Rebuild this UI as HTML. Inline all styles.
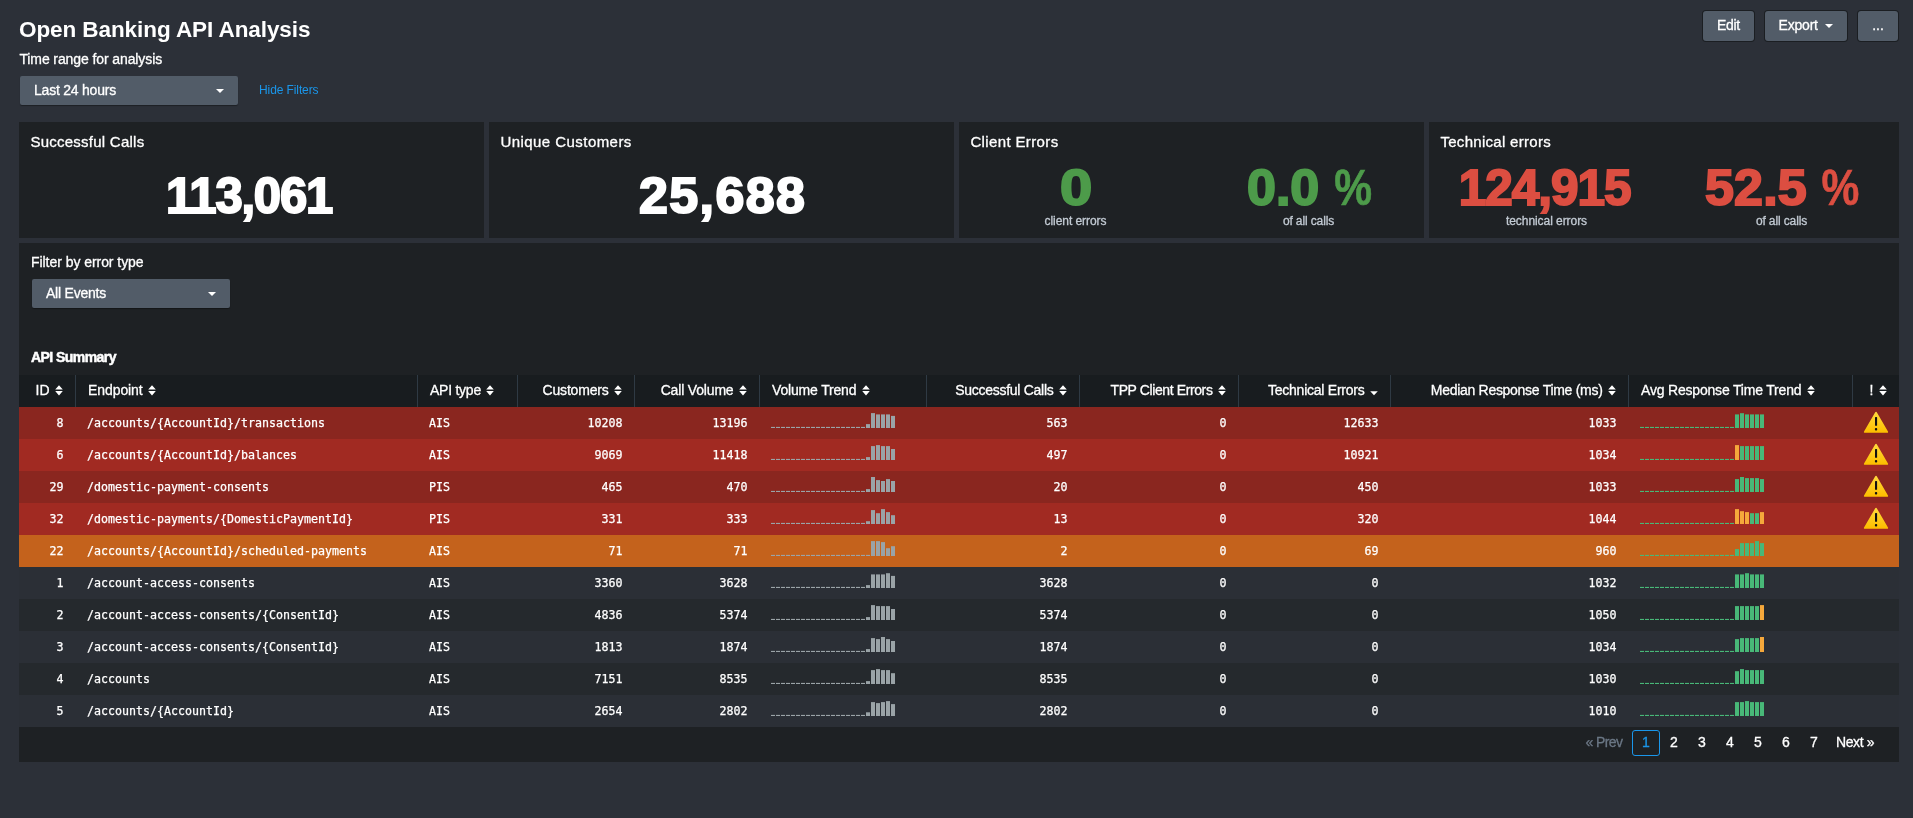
<!DOCTYPE html><html lang="en"><head><meta charset="utf-8"><title>Open Banking API Analysis</title><style>
*{box-sizing:border-box;margin:0;padding:0}
html,body{width:1913px;height:818px;overflow:hidden;background:#2c3038;}
body{position:relative;font-family:"Liberation Sans",sans-serif;color:#fff;font-size:14px;-webkit-font-smoothing:antialiased;will-change:transform}
th,.lbl,.pt,.btn,.dd,.pg,.sub{-webkit-text-stroke:0.3px currentColor}
h1{position:absolute;left:19px;top:16.5px;font-size:22.5px;line-height:26px;font-weight:700;letter-spacing:-0.08px;white-space:nowrap}
.btn{position:absolute;top:11px;height:30px;background:#525c68;border-radius:3px;box-shadow:0 0 0 1px #1b1e22;font-size:14px;line-height:29px;text-align:center;white-space:nowrap}
.caret{display:inline-block;width:0;height:0;border-left:4px solid transparent;border-right:4px solid transparent;border-top:4.5px solid #fff;vertical-align:middle}
.lbl{position:absolute;font-size:14px;line-height:16px;white-space:nowrap}
.dd{position:absolute;height:29px;background:#525c68;border-radius:2px;box-shadow:0 1px 1px rgba(0,0,0,.35);font-size:14px;line-height:28px;padding-left:14px;white-space:nowrap}
.dd .caret{position:absolute;right:14px;top:13px}
a.hf{position:absolute;left:259px;top:83px;font-size:12px;line-height:14px;color:#1a96ea;text-decoration:none;letter-spacing:-0.1px;white-space:nowrap}
.panel{position:absolute;background:#1e2124}
.pt{position:absolute;left:11.4px;top:11px;font-size:15px;line-height:18px;white-space:nowrap}
.big{position:absolute;font-weight:700;font-size:49.5px;line-height:48px;white-space:nowrap;-webkit-text-stroke:2px currentColor;transform:scaleX(1.05);transform-origin:0 0}
.pc{display:inline-block;font-size:50px;-webkit-text-stroke:0.6px currentColor;transform:scaleX(0.81);transform-origin:0 50%;letter-spacing:0}
.sub{position:absolute;font-size:12px;line-height:14px;color:#c3cbd4;white-space:nowrap;transform:translateX(-50%)}
table{position:absolute;left:0;top:132px;border-collapse:separate;border-spacing:0;table-layout:fixed;width:1880px}
th{height:32px;background:#181c1f;font-weight:400;font-size:14px;line-height:20px;padding:0 12px 2px;white-space:nowrap;border-right:1px solid #2f3a44;vertical-align:middle}
th:last-child{border-right:0}
th.r,td.r{text-align:right}
th.l,td.l{text-align:left}
th.r{padding-right:12px}
.srt{margin-left:5.5px;vertical-align:-1px}
td{height:32px;font-family:"DejaVu Sans Mono","Liberation Mono",monospace;font-size:11.63px;line-height:20px;padding:0 12px 1px 11px;white-space:nowrap;vertical-align:middle;-webkit-text-stroke:0.25px currentColor}
td.r{padding-right:12.5px}
td.s{padding:0 0 0 11px}
.spk{display:block;margin-top:-4px}
td.w{padding:0;text-align:center}
.wrn{display:block;margin:0 0 0 9px}
.pg{position:absolute;top:484px;left:0;width:1880px;height:35px;font-size:14px;line-height:26px}
.pg span{position:absolute;top:2px;height:26px;text-align:center;white-space:nowrap}
</style></head><body><svg width="0" height="0" style="position:absolute"><defs><linearGradient id="wg" x1="0" y1="0" x2="0" y2="1"><stop offset="0" stop-color="#ffd93a"/><stop offset="1" stop-color="#fdbf00"/></linearGradient></defs></svg><h1>Open Banking API Analysis</h1><div class="btn" style="left:1703px;width:51px;letter-spacing:-0.3px">Edit</div><div class="btn" style="left:1765px;width:82px;letter-spacing:-0.2px">Export <span class="caret" style="margin-left:4px"></span></div><div class="btn" style="left:1858px;width:40px">...</div><div class="lbl" style="left:19.4px;top:51px;letter-spacing:-0.1px">Time range for analysis</div><div class="dd" style="left:20px;top:76px;width:218px;letter-spacing:-0.22px">Last 24 hours<span class="caret"></span></div><a class="hf">Hide Filters</a><div class="panel" style="left:19px;top:122px;width:465px;height:116px"><div class="pt" style="letter-spacing:0.25px">Successful Calls</div><div class="big" id="b1" style="left:147.1px;top:49.5px;letter-spacing:-1.22px;color:#fff;transform:scaleX(0.99)">113,061</div></div><div class="panel" style="left:489px;top:122px;width:465px;height:116px"><div class="pt" style="letter-spacing:0.45px">Unique Customers</div><div class="big" id="b2" style="left:149.5px;top:49.5px;letter-spacing:1.32px;color:#fff">25,688</div></div><div class="panel" style="left:959px;top:122px;width:465px;height:116px"><div class="pt" style="letter-spacing:0.37px">Client Errors</div><div class="big" id="b3" style="left:100.6px;top:41.5px;letter-spacing:0px;color:#4d9b4a;transform:scaleX(1.17)">0</div><div class="sub" style="left:116.5px;top:92px;letter-spacing:-0.05px">client errors</div><div class="big" id="b4" style="left:287.5px;top:41.5px;letter-spacing:0.01px;color:#4d9b4a">0.0 <span class="pc">%</span></div><div class="sub" style="left:349.5px;top:92px;letter-spacing:-0.12px">of all calls</div></div><div class="panel" style="left:1429px;top:122px;width:470px;height:116px"><div class="pt" style="letter-spacing:0.3px">Technical errors</div><div class="big" id="b5" style="left:29.8px;top:41.5px;letter-spacing:-1.05px;color:#dc4e41;transform:scaleX(1.0)">124,915</div><div class="sub" style="left:117.5px;top:92px;letter-spacing:-0.06px">technical errors</div><div class="big" id="b6" style="left:276.2px;top:41.5px;letter-spacing:0.19px;color:#dc4e41">52.5 <span class="pc">%</span></div><div class="sub" style="left:352.5px;top:92px;letter-spacing:-0.12px">of all calls</div></div><div class="panel" style="left:19px;top:243px;width:1880px;height:519px"><div class="lbl" style="left:12px;top:11px;letter-spacing:-0.05px">Filter by error type</div><div class="dd" style="left:13px;top:36px;width:198px;letter-spacing:-0.22px">All Events<span class="caret"></span></div><div class="lbl" style="left:12px;top:106px;font-weight:700;letter-spacing:-0.55px;-webkit-text-stroke:0.5px #fff">API Summary</div><table><colgroup><col style="width:57px"><col style="width:342px"><col style="width:100px"><col style="width:117px"><col style="width:125px"><col style="width:167px"><col style="width:153px"><col style="width:159px"><col style="width:152px"><col style="width:238px"><col style="width:224px"><col style="width:46px"></colgroup><thead><tr><th class="r"><span style="letter-spacing:0px">ID</span><svg class="srt" width="8" height="11" viewBox="0 0 8 11"><path d="M0.2 4.5H7.8L4 0.2Z M0.2 6.1H7.8L4 10.5Z" fill="#fff"/></svg></th><th class="l"><span style="letter-spacing:-0.08px">Endpoint</span><svg class="srt" width="8" height="11" viewBox="0 0 8 11"><path d="M0.2 4.5H7.8L4 0.2Z M0.2 6.1H7.8L4 10.5Z" fill="#fff"/></svg></th><th class="l"><span style="letter-spacing:-0.25px">API type</span><svg class="srt" width="8" height="11" viewBox="0 0 8 11"><path d="M0.2 4.5H7.8L4 0.2Z M0.2 6.1H7.8L4 10.5Z" fill="#fff"/></svg></th><th class="r"><span style="letter-spacing:-0.2px">Customers</span><svg class="srt" width="8" height="11" viewBox="0 0 8 11"><path d="M0.2 4.5H7.8L4 0.2Z M0.2 6.1H7.8L4 10.5Z" fill="#fff"/></svg></th><th class="r"><span style="letter-spacing:-0.17px">Call Volume</span><svg class="srt" width="8" height="11" viewBox="0 0 8 11"><path d="M0.2 4.5H7.8L4 0.2Z M0.2 6.1H7.8L4 10.5Z" fill="#fff"/></svg></th><th class="l"><span style="letter-spacing:-0.17px">Volume Trend</span><svg class="srt" width="8" height="11" viewBox="0 0 8 11"><path d="M0.2 4.5H7.8L4 0.2Z M0.2 6.1H7.8L4 10.5Z" fill="#fff"/></svg></th><th class="r"><span style="letter-spacing:-0.28px">Successful Calls</span><svg class="srt" width="8" height="11" viewBox="0 0 8 11"><path d="M0.2 4.5H7.8L4 0.2Z M0.2 6.1H7.8L4 10.5Z" fill="#fff"/></svg></th><th class="r"><span style="letter-spacing:-0.39px">TPP Client Errors</span><svg class="srt" width="8" height="11" viewBox="0 0 8 11"><path d="M0.2 4.5H7.8L4 0.2Z M0.2 6.1H7.8L4 10.5Z" fill="#fff"/></svg></th><th class="r"><span style="letter-spacing:-0.24px">Technical Errors</span><svg class="srt" width="8" height="11" viewBox="0 0 8 11"><path d="M0.2 6.3H7.8L4 10.3Z" fill="#fff"/></svg></th><th class="r"><span style="letter-spacing:-0.29px">Median Response Time (ms)</span><svg class="srt" width="8" height="11" viewBox="0 0 8 11"><path d="M0.2 4.5H7.8L4 0.2Z M0.2 6.1H7.8L4 10.5Z" fill="#fff"/></svg></th><th class="l"><span style="letter-spacing:-0.19px">Avg Response Time Trend</span><svg class="srt" width="8" height="11" viewBox="0 0 8 11"><path d="M0.2 4.5H7.8L4 0.2Z M0.2 6.1H7.8L4 10.5Z" fill="#fff"/></svg></th><th class="r"><span style="letter-spacing:0px">!</span><svg class="srt" width="8" height="11" viewBox="0 0 8 11"><path d="M0.2 4.5H7.8L4 0.2Z M0.2 6.1H7.8L4 10.5Z" fill="#fff"/></svg></th></tr></thead><tbody><tr style="background:#8a261f"><td class="r">8</td><td class="l">/accounts/{AccountId}/transactions</td><td class="l">AIS</td><td class="r">10208</td><td class="r">13196</td><td class="s"><svg class="spk" width="124" height="16" viewBox="0 0 124 16"><rect x="0" y="13.9" width="4" height="1.1" fill="#9aa3a7"/><rect x="5" y="13.9" width="4" height="1.1" fill="#9aa3a7"/><rect x="10" y="13.9" width="4" height="1.1" fill="#9aa3a7"/><rect x="15" y="13.9" width="4" height="1.1" fill="#9aa3a7"/><rect x="20" y="13.9" width="4" height="1.1" fill="#9aa3a7"/><rect x="25" y="13.9" width="4" height="1.1" fill="#9aa3a7"/><rect x="30" y="13.9" width="4" height="1.1" fill="#9aa3a7"/><rect x="35" y="13.9" width="4" height="1.1" fill="#9aa3a7"/><rect x="40" y="13.9" width="4" height="1.1" fill="#9aa3a7"/><rect x="45" y="13.9" width="4" height="1.1" fill="#9aa3a7"/><rect x="50" y="13.9" width="4" height="1.1" fill="#9aa3a7"/><rect x="55" y="13.9" width="4" height="1.1" fill="#9aa3a7"/><rect x="60" y="13.9" width="4" height="1.1" fill="#9aa3a7"/><rect x="65" y="13.9" width="4" height="1.1" fill="#9aa3a7"/><rect x="70" y="13.9" width="4" height="1.1" fill="#9aa3a7"/><rect x="75" y="13.9" width="4" height="1.1" fill="#9aa3a7"/><rect x="80" y="13.9" width="4" height="1.1" fill="#9aa3a7"/><rect x="85" y="13.9" width="4" height="1.1" fill="#9aa3a7"/><rect x="90" y="13.9" width="4" height="1.1" fill="#9aa3a7"/><rect x="95" y="11.1" width="4" height="3.9" fill="#9aa3a7"/><rect x="100" y="0.1" width="4" height="14.9" fill="#9aa3a7"/><rect x="105" y="1.4" width="4" height="13.6" fill="#9aa3a7"/><rect x="110" y="1.4" width="4" height="13.6" fill="#9aa3a7"/><rect x="115" y="1.4" width="4" height="13.6" fill="#9aa3a7"/><rect x="120" y="2.9" width="4" height="12.1" fill="#9aa3a7"/></svg></td><td class="r">563</td><td class="r">0</td><td class="r">12633</td><td class="r">1033</td><td class="s"><svg class="spk" width="124" height="16" viewBox="0 0 124 16"><rect x="0" y="13.9" width="4" height="1.1" fill="#48b878"/><rect x="5" y="13.9" width="4" height="1.1" fill="#48b878"/><rect x="10" y="13.9" width="4" height="1.1" fill="#48b878"/><rect x="15" y="13.9" width="4" height="1.1" fill="#48b878"/><rect x="20" y="13.9" width="4" height="1.1" fill="#48b878"/><rect x="25" y="13.9" width="4" height="1.1" fill="#48b878"/><rect x="30" y="13.9" width="4" height="1.1" fill="#48b878"/><rect x="35" y="13.9" width="4" height="1.1" fill="#48b878"/><rect x="40" y="13.9" width="4" height="1.1" fill="#48b878"/><rect x="45" y="13.9" width="4" height="1.1" fill="#48b878"/><rect x="50" y="13.9" width="4" height="1.1" fill="#48b878"/><rect x="55" y="13.9" width="4" height="1.1" fill="#48b878"/><rect x="60" y="13.9" width="4" height="1.1" fill="#48b878"/><rect x="65" y="13.9" width="4" height="1.1" fill="#48b878"/><rect x="70" y="13.9" width="4" height="1.1" fill="#48b878"/><rect x="75" y="13.9" width="4" height="1.1" fill="#48b878"/><rect x="80" y="13.9" width="4" height="1.1" fill="#48b878"/><rect x="85" y="13.9" width="4" height="1.1" fill="#48b878"/><rect x="90" y="13.9" width="4" height="1.1" fill="#48b878"/><rect x="95" y="1.4" width="4" height="13.6" fill="#48b878"/><rect x="100" y="0.2" width="4" height="14.8" fill="#48b878"/><rect x="105" y="1.4" width="4" height="13.6" fill="#48b878"/><rect x="110" y="1.4" width="4" height="13.6" fill="#48b878"/><rect x="115" y="1.4" width="4" height="13.6" fill="#48b878"/><rect x="120" y="1.4" width="4" height="13.6" fill="#48b878"/></svg></td><td class="w"><svg class="wrn" width="28" height="24" viewBox="0 0 28 24"><path d="M14 1.8L2.8 20.9H25.2Z" fill="url(#wg)" stroke="url(#wg)" stroke-width="1.8" stroke-linejoin="round"/><rect x="13" y="6.1" width="2.1" height="8.7" rx="0.6" fill="#111"/><rect x="12.9" y="17.0" width="2.3" height="2.4" rx="0.9" fill="#111"/></svg></td></tr><tr style="background:#a12a22"><td class="r">6</td><td class="l">/accounts/{AccountId}/balances</td><td class="l">AIS</td><td class="r">9069</td><td class="r">11418</td><td class="s"><svg class="spk" width="124" height="16" viewBox="0 0 124 16"><rect x="0" y="13.9" width="4" height="1.1" fill="#9aa3a7"/><rect x="5" y="13.9" width="4" height="1.1" fill="#9aa3a7"/><rect x="10" y="13.9" width="4" height="1.1" fill="#9aa3a7"/><rect x="15" y="13.9" width="4" height="1.1" fill="#9aa3a7"/><rect x="20" y="13.9" width="4" height="1.1" fill="#9aa3a7"/><rect x="25" y="13.9" width="4" height="1.1" fill="#9aa3a7"/><rect x="30" y="13.9" width="4" height="1.1" fill="#9aa3a7"/><rect x="35" y="13.9" width="4" height="1.1" fill="#9aa3a7"/><rect x="40" y="13.9" width="4" height="1.1" fill="#9aa3a7"/><rect x="45" y="13.9" width="4" height="1.1" fill="#9aa3a7"/><rect x="50" y="13.9" width="4" height="1.1" fill="#9aa3a7"/><rect x="55" y="13.9" width="4" height="1.1" fill="#9aa3a7"/><rect x="60" y="13.9" width="4" height="1.1" fill="#9aa3a7"/><rect x="65" y="13.9" width="4" height="1.1" fill="#9aa3a7"/><rect x="70" y="13.9" width="4" height="1.1" fill="#9aa3a7"/><rect x="75" y="13.9" width="4" height="1.1" fill="#9aa3a7"/><rect x="80" y="13.9" width="4" height="1.1" fill="#9aa3a7"/><rect x="85" y="13.9" width="4" height="1.1" fill="#9aa3a7"/><rect x="90" y="13.9" width="4" height="1.1" fill="#9aa3a7"/><rect x="95" y="12.1" width="4" height="2.9" fill="#9aa3a7"/><rect x="100" y="1.1" width="4" height="13.9" fill="#9aa3a7"/><rect x="105" y="0.1" width="4" height="14.9" fill="#9aa3a7"/><rect x="110" y="1.1" width="4" height="13.9" fill="#9aa3a7"/><rect x="115" y="1.1" width="4" height="13.9" fill="#9aa3a7"/><rect x="120" y="4.0" width="4" height="11.0" fill="#9aa3a7"/></svg></td><td class="r">497</td><td class="r">0</td><td class="r">10921</td><td class="r">1034</td><td class="s"><svg class="spk" width="124" height="16" viewBox="0 0 124 16"><rect x="0" y="13.9" width="4" height="1.1" fill="#48b878"/><rect x="5" y="13.9" width="4" height="1.1" fill="#48b878"/><rect x="10" y="13.9" width="4" height="1.1" fill="#48b878"/><rect x="15" y="13.9" width="4" height="1.1" fill="#48b878"/><rect x="20" y="13.9" width="4" height="1.1" fill="#48b878"/><rect x="25" y="13.9" width="4" height="1.1" fill="#48b878"/><rect x="30" y="13.9" width="4" height="1.1" fill="#48b878"/><rect x="35" y="13.9" width="4" height="1.1" fill="#48b878"/><rect x="40" y="13.9" width="4" height="1.1" fill="#48b878"/><rect x="45" y="13.9" width="4" height="1.1" fill="#48b878"/><rect x="50" y="13.9" width="4" height="1.1" fill="#48b878"/><rect x="55" y="13.9" width="4" height="1.1" fill="#48b878"/><rect x="60" y="13.9" width="4" height="1.1" fill="#48b878"/><rect x="65" y="13.9" width="4" height="1.1" fill="#48b878"/><rect x="70" y="13.9" width="4" height="1.1" fill="#48b878"/><rect x="75" y="13.9" width="4" height="1.1" fill="#48b878"/><rect x="80" y="13.9" width="4" height="1.1" fill="#48b878"/><rect x="85" y="13.9" width="4" height="1.1" fill="#48b878"/><rect x="90" y="13.9" width="4" height="1.1" fill="#48b878"/><rect x="95" y="0.1" width="4" height="14.9" fill="#f5a83b"/><rect x="100" y="1.1" width="4" height="13.9" fill="#48b878"/><rect x="105" y="1.1" width="4" height="13.9" fill="#48b878"/><rect x="110" y="1.1" width="4" height="13.9" fill="#48b878"/><rect x="115" y="1.1" width="4" height="13.9" fill="#48b878"/><rect x="120" y="1.1" width="4" height="13.9" fill="#48b878"/></svg></td><td class="w"><svg class="wrn" width="28" height="24" viewBox="0 0 28 24"><path d="M14 1.8L2.8 20.9H25.2Z" fill="url(#wg)" stroke="url(#wg)" stroke-width="1.8" stroke-linejoin="round"/><rect x="13" y="6.1" width="2.1" height="8.7" rx="0.6" fill="#111"/><rect x="12.9" y="17.0" width="2.3" height="2.4" rx="0.9" fill="#111"/></svg></td></tr><tr style="background:#8a261f"><td class="r">29</td><td class="l">/domestic-payment-consents</td><td class="l">PIS</td><td class="r">465</td><td class="r">470</td><td class="s"><svg class="spk" width="124" height="16" viewBox="0 0 124 16"><rect x="0" y="13.9" width="4" height="1.1" fill="#9aa3a7"/><rect x="5" y="13.9" width="4" height="1.1" fill="#9aa3a7"/><rect x="10" y="13.9" width="4" height="1.1" fill="#9aa3a7"/><rect x="15" y="13.9" width="4" height="1.1" fill="#9aa3a7"/><rect x="20" y="13.9" width="4" height="1.1" fill="#9aa3a7"/><rect x="25" y="13.9" width="4" height="1.1" fill="#9aa3a7"/><rect x="30" y="13.9" width="4" height="1.1" fill="#9aa3a7"/><rect x="35" y="13.9" width="4" height="1.1" fill="#9aa3a7"/><rect x="40" y="13.9" width="4" height="1.1" fill="#9aa3a7"/><rect x="45" y="13.9" width="4" height="1.1" fill="#9aa3a7"/><rect x="50" y="13.9" width="4" height="1.1" fill="#9aa3a7"/><rect x="55" y="13.9" width="4" height="1.1" fill="#9aa3a7"/><rect x="60" y="13.9" width="4" height="1.1" fill="#9aa3a7"/><rect x="65" y="13.9" width="4" height="1.1" fill="#9aa3a7"/><rect x="70" y="13.9" width="4" height="1.1" fill="#9aa3a7"/><rect x="75" y="13.9" width="4" height="1.1" fill="#9aa3a7"/><rect x="80" y="13.9" width="4" height="1.1" fill="#9aa3a7"/><rect x="85" y="13.9" width="4" height="1.1" fill="#9aa3a7"/><rect x="90" y="13.9" width="4" height="1.1" fill="#9aa3a7"/><rect x="95" y="12.1" width="4" height="2.9" fill="#9aa3a7"/><rect x="100" y="-0.1" width="4" height="15.1" fill="#9aa3a7"/><rect x="105" y="3.1" width="4" height="11.9" fill="#9aa3a7"/><rect x="110" y="4.0" width="4" height="11.0" fill="#9aa3a7"/><rect x="115" y="2.1" width="4" height="12.9" fill="#9aa3a7"/><rect x="120" y="4.0" width="4" height="11.0" fill="#9aa3a7"/></svg></td><td class="r">20</td><td class="r">0</td><td class="r">450</td><td class="r">1033</td><td class="s"><svg class="spk" width="124" height="16" viewBox="0 0 124 16"><rect x="0" y="13.9" width="4" height="1.1" fill="#48b878"/><rect x="5" y="13.9" width="4" height="1.1" fill="#48b878"/><rect x="10" y="13.9" width="4" height="1.1" fill="#48b878"/><rect x="15" y="13.9" width="4" height="1.1" fill="#48b878"/><rect x="20" y="13.9" width="4" height="1.1" fill="#48b878"/><rect x="25" y="13.9" width="4" height="1.1" fill="#48b878"/><rect x="30" y="13.9" width="4" height="1.1" fill="#48b878"/><rect x="35" y="13.9" width="4" height="1.1" fill="#48b878"/><rect x="40" y="13.9" width="4" height="1.1" fill="#48b878"/><rect x="45" y="13.9" width="4" height="1.1" fill="#48b878"/><rect x="50" y="13.9" width="4" height="1.1" fill="#48b878"/><rect x="55" y="13.9" width="4" height="1.1" fill="#48b878"/><rect x="60" y="13.9" width="4" height="1.1" fill="#48b878"/><rect x="65" y="13.9" width="4" height="1.1" fill="#48b878"/><rect x="70" y="13.9" width="4" height="1.1" fill="#48b878"/><rect x="75" y="13.9" width="4" height="1.1" fill="#48b878"/><rect x="80" y="13.9" width="4" height="1.1" fill="#48b878"/><rect x="85" y="13.9" width="4" height="1.1" fill="#48b878"/><rect x="90" y="13.9" width="4" height="1.1" fill="#48b878"/><rect x="95" y="2.1" width="4" height="12.9" fill="#48b878"/><rect x="100" y="-0.1" width="4" height="15.1" fill="#48b878"/><rect x="105" y="1.1" width="4" height="13.9" fill="#48b878"/><rect x="110" y="1.1" width="4" height="13.9" fill="#48b878"/><rect x="115" y="1.1" width="4" height="13.9" fill="#48b878"/><rect x="120" y="2.1" width="4" height="12.9" fill="#48b878"/></svg></td><td class="w"><svg class="wrn" width="28" height="24" viewBox="0 0 28 24"><path d="M14 1.8L2.8 20.9H25.2Z" fill="url(#wg)" stroke="url(#wg)" stroke-width="1.8" stroke-linejoin="round"/><rect x="13" y="6.1" width="2.1" height="8.7" rx="0.6" fill="#111"/><rect x="12.9" y="17.0" width="2.3" height="2.4" rx="0.9" fill="#111"/></svg></td></tr><tr style="background:#a12a22"><td class="r">32</td><td class="l">/domestic-payments/{DomesticPaymentId}</td><td class="l">PIS</td><td class="r">331</td><td class="r">333</td><td class="s"><svg class="spk" width="124" height="16" viewBox="0 0 124 16"><rect x="0" y="13.9" width="4" height="1.1" fill="#9aa3a7"/><rect x="5" y="13.9" width="4" height="1.1" fill="#9aa3a7"/><rect x="10" y="13.9" width="4" height="1.1" fill="#9aa3a7"/><rect x="15" y="13.9" width="4" height="1.1" fill="#9aa3a7"/><rect x="20" y="13.9" width="4" height="1.1" fill="#9aa3a7"/><rect x="25" y="13.9" width="4" height="1.1" fill="#9aa3a7"/><rect x="30" y="13.9" width="4" height="1.1" fill="#9aa3a7"/><rect x="35" y="13.9" width="4" height="1.1" fill="#9aa3a7"/><rect x="40" y="13.9" width="4" height="1.1" fill="#9aa3a7"/><rect x="45" y="13.9" width="4" height="1.1" fill="#9aa3a7"/><rect x="50" y="13.9" width="4" height="1.1" fill="#9aa3a7"/><rect x="55" y="13.9" width="4" height="1.1" fill="#9aa3a7"/><rect x="60" y="13.9" width="4" height="1.1" fill="#9aa3a7"/><rect x="65" y="13.9" width="4" height="1.1" fill="#9aa3a7"/><rect x="70" y="13.9" width="4" height="1.1" fill="#9aa3a7"/><rect x="75" y="13.9" width="4" height="1.1" fill="#9aa3a7"/><rect x="80" y="13.9" width="4" height="1.1" fill="#9aa3a7"/><rect x="85" y="13.9" width="4" height="1.1" fill="#9aa3a7"/><rect x="90" y="13.9" width="4" height="1.1" fill="#9aa3a7"/><rect x="95" y="12.2" width="4" height="2.8" fill="#9aa3a7"/><rect x="100" y="1.1" width="4" height="13.9" fill="#9aa3a7"/><rect x="105" y="4.2" width="4" height="10.8" fill="#9aa3a7"/><rect x="110" y="0.1" width="4" height="14.9" fill="#9aa3a7"/><rect x="115" y="3.1" width="4" height="11.9" fill="#9aa3a7"/><rect x="120" y="6.2" width="4" height="8.8" fill="#9aa3a7"/></svg></td><td class="r">13</td><td class="r">0</td><td class="r">320</td><td class="r">1044</td><td class="s"><svg class="spk" width="124" height="16" viewBox="0 0 124 16"><rect x="0" y="13.9" width="4" height="1.1" fill="#48b878"/><rect x="5" y="13.9" width="4" height="1.1" fill="#48b878"/><rect x="10" y="13.9" width="4" height="1.1" fill="#48b878"/><rect x="15" y="13.9" width="4" height="1.1" fill="#48b878"/><rect x="20" y="13.9" width="4" height="1.1" fill="#48b878"/><rect x="25" y="13.9" width="4" height="1.1" fill="#48b878"/><rect x="30" y="13.9" width="4" height="1.1" fill="#48b878"/><rect x="35" y="13.9" width="4" height="1.1" fill="#48b878"/><rect x="40" y="13.9" width="4" height="1.1" fill="#48b878"/><rect x="45" y="13.9" width="4" height="1.1" fill="#48b878"/><rect x="50" y="13.9" width="4" height="1.1" fill="#48b878"/><rect x="55" y="13.9" width="4" height="1.1" fill="#48b878"/><rect x="60" y="13.9" width="4" height="1.1" fill="#48b878"/><rect x="65" y="13.9" width="4" height="1.1" fill="#48b878"/><rect x="70" y="13.9" width="4" height="1.1" fill="#48b878"/><rect x="75" y="13.9" width="4" height="1.1" fill="#48b878"/><rect x="80" y="13.9" width="4" height="1.1" fill="#48b878"/><rect x="85" y="13.9" width="4" height="1.1" fill="#48b878"/><rect x="90" y="13.9" width="4" height="1.1" fill="#48b878"/><rect x="95" y="0.1" width="4" height="14.9" fill="#f5a83b"/><rect x="100" y="2.2" width="4" height="12.8" fill="#f5a83b"/><rect x="105" y="3.1" width="4" height="11.9" fill="#f5a83b"/><rect x="110" y="4.2" width="4" height="10.8" fill="#48b878"/><rect x="115" y="4.2" width="4" height="10.8" fill="#48b878"/><rect x="120" y="3.1" width="4" height="11.9" fill="#f5a83b"/></svg></td><td class="w"><svg class="wrn" width="28" height="24" viewBox="0 0 28 24"><path d="M14 1.8L2.8 20.9H25.2Z" fill="url(#wg)" stroke="url(#wg)" stroke-width="1.8" stroke-linejoin="round"/><rect x="13" y="6.1" width="2.1" height="8.7" rx="0.6" fill="#111"/><rect x="12.9" y="17.0" width="2.3" height="2.4" rx="0.9" fill="#111"/></svg></td></tr><tr style="background:#c4621c"><td class="r">22</td><td class="l">/accounts/{AccountId}/scheduled-payments</td><td class="l">AIS</td><td class="r">71</td><td class="r">71</td><td class="s"><svg class="spk" width="124" height="16" viewBox="0 0 124 16"><rect x="0" y="13.9" width="4" height="1.1" fill="#9aa3a7"/><rect x="5" y="13.9" width="4" height="1.1" fill="#9aa3a7"/><rect x="10" y="13.9" width="4" height="1.1" fill="#9aa3a7"/><rect x="15" y="13.9" width="4" height="1.1" fill="#9aa3a7"/><rect x="20" y="13.9" width="4" height="1.1" fill="#9aa3a7"/><rect x="25" y="13.9" width="4" height="1.1" fill="#9aa3a7"/><rect x="30" y="13.9" width="4" height="1.1" fill="#9aa3a7"/><rect x="35" y="13.9" width="4" height="1.1" fill="#9aa3a7"/><rect x="40" y="13.9" width="4" height="1.1" fill="#9aa3a7"/><rect x="45" y="13.9" width="4" height="1.1" fill="#9aa3a7"/><rect x="50" y="13.9" width="4" height="1.1" fill="#9aa3a7"/><rect x="55" y="13.9" width="4" height="1.1" fill="#9aa3a7"/><rect x="60" y="13.9" width="4" height="1.1" fill="#9aa3a7"/><rect x="65" y="13.9" width="4" height="1.1" fill="#9aa3a7"/><rect x="70" y="13.9" width="4" height="1.1" fill="#9aa3a7"/><rect x="75" y="13.9" width="4" height="1.1" fill="#9aa3a7"/><rect x="80" y="13.9" width="4" height="1.1" fill="#9aa3a7"/><rect x="85" y="13.9" width="4" height="1.1" fill="#9aa3a7"/><rect x="90" y="13.9" width="4" height="1.1" fill="#9aa3a7"/><rect x="95" y="13.9" width="4" height="1.1" fill="#9aa3a7"/><rect x="100" y="0.1" width="4" height="14.9" fill="#9aa3a7"/><rect x="105" y="0.1" width="4" height="14.9" fill="#9aa3a7"/><rect x="110" y="1.1" width="4" height="13.9" fill="#9aa3a7"/><rect x="115" y="7.2" width="4" height="7.8" fill="#9aa3a7"/><rect x="120" y="5.2" width="4" height="9.8" fill="#9aa3a7"/></svg></td><td class="r">2</td><td class="r">0</td><td class="r">69</td><td class="r">960</td><td class="s"><svg class="spk" width="124" height="16" viewBox="0 0 124 16"><rect x="0" y="13.9" width="4" height="1.1" fill="#48b878"/><rect x="5" y="13.9" width="4" height="1.1" fill="#48b878"/><rect x="10" y="13.9" width="4" height="1.1" fill="#48b878"/><rect x="15" y="13.9" width="4" height="1.1" fill="#48b878"/><rect x="20" y="13.9" width="4" height="1.1" fill="#48b878"/><rect x="25" y="13.9" width="4" height="1.1" fill="#48b878"/><rect x="30" y="13.9" width="4" height="1.1" fill="#48b878"/><rect x="35" y="13.9" width="4" height="1.1" fill="#48b878"/><rect x="40" y="13.9" width="4" height="1.1" fill="#48b878"/><rect x="45" y="13.9" width="4" height="1.1" fill="#48b878"/><rect x="50" y="13.9" width="4" height="1.1" fill="#48b878"/><rect x="55" y="13.9" width="4" height="1.1" fill="#48b878"/><rect x="60" y="13.9" width="4" height="1.1" fill="#48b878"/><rect x="65" y="13.9" width="4" height="1.1" fill="#48b878"/><rect x="70" y="13.9" width="4" height="1.1" fill="#48b878"/><rect x="75" y="13.9" width="4" height="1.1" fill="#48b878"/><rect x="80" y="13.9" width="4" height="1.1" fill="#48b878"/><rect x="85" y="13.9" width="4" height="1.1" fill="#48b878"/><rect x="90" y="13.9" width="4" height="1.1" fill="#48b878"/><rect x="95" y="8.1" width="4" height="6.9" fill="#48b878"/><rect x="100" y="2.1" width="4" height="12.9" fill="#48b878"/><rect x="105" y="2.1" width="4" height="12.9" fill="#48b878"/><rect x="110" y="2.1" width="4" height="12.9" fill="#48b878"/><rect x="115" y="0.1" width="4" height="14.9" fill="#48b878"/><rect x="120" y="2.1" width="4" height="12.9" fill="#48b878"/></svg></td><td class="w"></td></tr><tr style="background:#2b2f36"><td class="r">1</td><td class="l">/account-access-consents</td><td class="l">AIS</td><td class="r">3360</td><td class="r">3628</td><td class="s"><svg class="spk" width="124" height="16" viewBox="0 0 124 16"><rect x="0" y="13.9" width="4" height="1.1" fill="#9aa3a7"/><rect x="5" y="13.9" width="4" height="1.1" fill="#9aa3a7"/><rect x="10" y="13.9" width="4" height="1.1" fill="#9aa3a7"/><rect x="15" y="13.9" width="4" height="1.1" fill="#9aa3a7"/><rect x="20" y="13.9" width="4" height="1.1" fill="#9aa3a7"/><rect x="25" y="13.9" width="4" height="1.1" fill="#9aa3a7"/><rect x="30" y="13.9" width="4" height="1.1" fill="#9aa3a7"/><rect x="35" y="13.9" width="4" height="1.1" fill="#9aa3a7"/><rect x="40" y="13.9" width="4" height="1.1" fill="#9aa3a7"/><rect x="45" y="13.9" width="4" height="1.1" fill="#9aa3a7"/><rect x="50" y="13.9" width="4" height="1.1" fill="#9aa3a7"/><rect x="55" y="13.9" width="4" height="1.1" fill="#9aa3a7"/><rect x="60" y="13.9" width="4" height="1.1" fill="#9aa3a7"/><rect x="65" y="13.9" width="4" height="1.1" fill="#9aa3a7"/><rect x="70" y="13.9" width="4" height="1.1" fill="#9aa3a7"/><rect x="75" y="13.9" width="4" height="1.1" fill="#9aa3a7"/><rect x="80" y="13.9" width="4" height="1.1" fill="#9aa3a7"/><rect x="85" y="13.9" width="4" height="1.1" fill="#9aa3a7"/><rect x="90" y="13.9" width="4" height="1.1" fill="#9aa3a7"/><rect x="95" y="12.1" width="4" height="2.9" fill="#9aa3a7"/><rect x="100" y="1.4" width="4" height="13.6" fill="#9aa3a7"/><rect x="105" y="1.4" width="4" height="13.6" fill="#9aa3a7"/><rect x="110" y="1.4" width="4" height="13.6" fill="#9aa3a7"/><rect x="115" y="0.2" width="4" height="14.8" fill="#9aa3a7"/><rect x="120" y="2.9" width="4" height="12.1" fill="#9aa3a7"/></svg></td><td class="r">3628</td><td class="r">0</td><td class="r">0</td><td class="r">1032</td><td class="s"><svg class="spk" width="124" height="16" viewBox="0 0 124 16"><rect x="0" y="13.9" width="4" height="1.1" fill="#48b878"/><rect x="5" y="13.9" width="4" height="1.1" fill="#48b878"/><rect x="10" y="13.9" width="4" height="1.1" fill="#48b878"/><rect x="15" y="13.9" width="4" height="1.1" fill="#48b878"/><rect x="20" y="13.9" width="4" height="1.1" fill="#48b878"/><rect x="25" y="13.9" width="4" height="1.1" fill="#48b878"/><rect x="30" y="13.9" width="4" height="1.1" fill="#48b878"/><rect x="35" y="13.9" width="4" height="1.1" fill="#48b878"/><rect x="40" y="13.9" width="4" height="1.1" fill="#48b878"/><rect x="45" y="13.9" width="4" height="1.1" fill="#48b878"/><rect x="50" y="13.9" width="4" height="1.1" fill="#48b878"/><rect x="55" y="13.9" width="4" height="1.1" fill="#48b878"/><rect x="60" y="13.9" width="4" height="1.1" fill="#48b878"/><rect x="65" y="13.9" width="4" height="1.1" fill="#48b878"/><rect x="70" y="13.9" width="4" height="1.1" fill="#48b878"/><rect x="75" y="13.9" width="4" height="1.1" fill="#48b878"/><rect x="80" y="13.9" width="4" height="1.1" fill="#48b878"/><rect x="85" y="13.9" width="4" height="1.1" fill="#48b878"/><rect x="90" y="13.9" width="4" height="1.1" fill="#48b878"/><rect x="95" y="1.4" width="4" height="13.6" fill="#48b878"/><rect x="100" y="1.4" width="4" height="13.6" fill="#48b878"/><rect x="105" y="0.2" width="4" height="14.8" fill="#48b878"/><rect x="110" y="1.4" width="4" height="13.6" fill="#48b878"/><rect x="115" y="1.4" width="4" height="13.6" fill="#48b878"/><rect x="120" y="1.4" width="4" height="13.6" fill="#48b878"/></svg></td><td class="w"></td></tr><tr style="background:#25292d"><td class="r">2</td><td class="l">/account-access-consents/{ConsentId}</td><td class="l">AIS</td><td class="r">4836</td><td class="r">5374</td><td class="s"><svg class="spk" width="124" height="16" viewBox="0 0 124 16"><rect x="0" y="13.9" width="4" height="1.1" fill="#9aa3a7"/><rect x="5" y="13.9" width="4" height="1.1" fill="#9aa3a7"/><rect x="10" y="13.9" width="4" height="1.1" fill="#9aa3a7"/><rect x="15" y="13.9" width="4" height="1.1" fill="#9aa3a7"/><rect x="20" y="13.9" width="4" height="1.1" fill="#9aa3a7"/><rect x="25" y="13.9" width="4" height="1.1" fill="#9aa3a7"/><rect x="30" y="13.9" width="4" height="1.1" fill="#9aa3a7"/><rect x="35" y="13.9" width="4" height="1.1" fill="#9aa3a7"/><rect x="40" y="13.9" width="4" height="1.1" fill="#9aa3a7"/><rect x="45" y="13.9" width="4" height="1.1" fill="#9aa3a7"/><rect x="50" y="13.9" width="4" height="1.1" fill="#9aa3a7"/><rect x="55" y="13.9" width="4" height="1.1" fill="#9aa3a7"/><rect x="60" y="13.9" width="4" height="1.1" fill="#9aa3a7"/><rect x="65" y="13.9" width="4" height="1.1" fill="#9aa3a7"/><rect x="70" y="13.9" width="4" height="1.1" fill="#9aa3a7"/><rect x="75" y="13.9" width="4" height="1.1" fill="#9aa3a7"/><rect x="80" y="13.9" width="4" height="1.1" fill="#9aa3a7"/><rect x="85" y="13.9" width="4" height="1.1" fill="#9aa3a7"/><rect x="90" y="13.9" width="4" height="1.1" fill="#9aa3a7"/><rect x="95" y="12.1" width="4" height="2.9" fill="#9aa3a7"/><rect x="100" y="0.1" width="4" height="14.9" fill="#9aa3a7"/><rect x="105" y="1.1" width="4" height="13.9" fill="#9aa3a7"/><rect x="110" y="1.1" width="4" height="13.9" fill="#9aa3a7"/><rect x="115" y="1.1" width="4" height="13.9" fill="#9aa3a7"/><rect x="120" y="4.0" width="4" height="11.0" fill="#9aa3a7"/></svg></td><td class="r">5374</td><td class="r">0</td><td class="r">0</td><td class="r">1050</td><td class="s"><svg class="spk" width="124" height="16" viewBox="0 0 124 16"><rect x="0" y="13.9" width="4" height="1.1" fill="#48b878"/><rect x="5" y="13.9" width="4" height="1.1" fill="#48b878"/><rect x="10" y="13.9" width="4" height="1.1" fill="#48b878"/><rect x="15" y="13.9" width="4" height="1.1" fill="#48b878"/><rect x="20" y="13.9" width="4" height="1.1" fill="#48b878"/><rect x="25" y="13.9" width="4" height="1.1" fill="#48b878"/><rect x="30" y="13.9" width="4" height="1.1" fill="#48b878"/><rect x="35" y="13.9" width="4" height="1.1" fill="#48b878"/><rect x="40" y="13.9" width="4" height="1.1" fill="#48b878"/><rect x="45" y="13.9" width="4" height="1.1" fill="#48b878"/><rect x="50" y="13.9" width="4" height="1.1" fill="#48b878"/><rect x="55" y="13.9" width="4" height="1.1" fill="#48b878"/><rect x="60" y="13.9" width="4" height="1.1" fill="#48b878"/><rect x="65" y="13.9" width="4" height="1.1" fill="#48b878"/><rect x="70" y="13.9" width="4" height="1.1" fill="#48b878"/><rect x="75" y="13.9" width="4" height="1.1" fill="#48b878"/><rect x="80" y="13.9" width="4" height="1.1" fill="#48b878"/><rect x="85" y="13.9" width="4" height="1.1" fill="#48b878"/><rect x="90" y="13.9" width="4" height="1.1" fill="#48b878"/><rect x="95" y="1.1" width="4" height="13.9" fill="#48b878"/><rect x="100" y="1.1" width="4" height="13.9" fill="#48b878"/><rect x="105" y="1.1" width="4" height="13.9" fill="#48b878"/><rect x="110" y="1.1" width="4" height="13.9" fill="#48b878"/><rect x="115" y="1.1" width="4" height="13.9" fill="#48b878"/><rect x="120" y="0.1" width="4" height="14.9" fill="#f5a83b"/></svg></td><td class="w"></td></tr><tr style="background:#2b2f36"><td class="r">3</td><td class="l">/account-access-consents/{ConsentId}</td><td class="l">AIS</td><td class="r">1813</td><td class="r">1874</td><td class="s"><svg class="spk" width="124" height="16" viewBox="0 0 124 16"><rect x="0" y="13.9" width="4" height="1.1" fill="#9aa3a7"/><rect x="5" y="13.9" width="4" height="1.1" fill="#9aa3a7"/><rect x="10" y="13.9" width="4" height="1.1" fill="#9aa3a7"/><rect x="15" y="13.9" width="4" height="1.1" fill="#9aa3a7"/><rect x="20" y="13.9" width="4" height="1.1" fill="#9aa3a7"/><rect x="25" y="13.9" width="4" height="1.1" fill="#9aa3a7"/><rect x="30" y="13.9" width="4" height="1.1" fill="#9aa3a7"/><rect x="35" y="13.9" width="4" height="1.1" fill="#9aa3a7"/><rect x="40" y="13.9" width="4" height="1.1" fill="#9aa3a7"/><rect x="45" y="13.9" width="4" height="1.1" fill="#9aa3a7"/><rect x="50" y="13.9" width="4" height="1.1" fill="#9aa3a7"/><rect x="55" y="13.9" width="4" height="1.1" fill="#9aa3a7"/><rect x="60" y="13.9" width="4" height="1.1" fill="#9aa3a7"/><rect x="65" y="13.9" width="4" height="1.1" fill="#9aa3a7"/><rect x="70" y="13.9" width="4" height="1.1" fill="#9aa3a7"/><rect x="75" y="13.9" width="4" height="1.1" fill="#9aa3a7"/><rect x="80" y="13.9" width="4" height="1.1" fill="#9aa3a7"/><rect x="85" y="13.9" width="4" height="1.1" fill="#9aa3a7"/><rect x="90" y="13.9" width="4" height="1.1" fill="#9aa3a7"/><rect x="95" y="12.1" width="4" height="2.9" fill="#9aa3a7"/><rect x="100" y="1.1" width="4" height="13.9" fill="#9aa3a7"/><rect x="105" y="2.1" width="4" height="12.9" fill="#9aa3a7"/><rect x="110" y="-0.1" width="4" height="15.1" fill="#9aa3a7"/><rect x="115" y="2.1" width="4" height="12.9" fill="#9aa3a7"/><rect x="120" y="4.0" width="4" height="11.0" fill="#9aa3a7"/></svg></td><td class="r">1874</td><td class="r">0</td><td class="r">0</td><td class="r">1034</td><td class="s"><svg class="spk" width="124" height="16" viewBox="0 0 124 16"><rect x="0" y="13.9" width="4" height="1.1" fill="#48b878"/><rect x="5" y="13.9" width="4" height="1.1" fill="#48b878"/><rect x="10" y="13.9" width="4" height="1.1" fill="#48b878"/><rect x="15" y="13.9" width="4" height="1.1" fill="#48b878"/><rect x="20" y="13.9" width="4" height="1.1" fill="#48b878"/><rect x="25" y="13.9" width="4" height="1.1" fill="#48b878"/><rect x="30" y="13.9" width="4" height="1.1" fill="#48b878"/><rect x="35" y="13.9" width="4" height="1.1" fill="#48b878"/><rect x="40" y="13.9" width="4" height="1.1" fill="#48b878"/><rect x="45" y="13.9" width="4" height="1.1" fill="#48b878"/><rect x="50" y="13.9" width="4" height="1.1" fill="#48b878"/><rect x="55" y="13.9" width="4" height="1.1" fill="#48b878"/><rect x="60" y="13.9" width="4" height="1.1" fill="#48b878"/><rect x="65" y="13.9" width="4" height="1.1" fill="#48b878"/><rect x="70" y="13.9" width="4" height="1.1" fill="#48b878"/><rect x="75" y="13.9" width="4" height="1.1" fill="#48b878"/><rect x="80" y="13.9" width="4" height="1.1" fill="#48b878"/><rect x="85" y="13.9" width="4" height="1.1" fill="#48b878"/><rect x="90" y="13.9" width="4" height="1.1" fill="#48b878"/><rect x="95" y="2.1" width="4" height="12.9" fill="#48b878"/><rect x="100" y="1.1" width="4" height="13.9" fill="#48b878"/><rect x="105" y="1.1" width="4" height="13.9" fill="#48b878"/><rect x="110" y="1.1" width="4" height="13.9" fill="#48b878"/><rect x="115" y="1.1" width="4" height="13.9" fill="#48b878"/><rect x="120" y="-0.1" width="4" height="15.1" fill="#f5a83b"/></svg></td><td class="w"></td></tr><tr style="background:#25292d"><td class="r">4</td><td class="l">/accounts</td><td class="l">AIS</td><td class="r">7151</td><td class="r">8535</td><td class="s"><svg class="spk" width="124" height="16" viewBox="0 0 124 16"><rect x="0" y="13.9" width="4" height="1.1" fill="#9aa3a7"/><rect x="5" y="13.9" width="4" height="1.1" fill="#9aa3a7"/><rect x="10" y="13.9" width="4" height="1.1" fill="#9aa3a7"/><rect x="15" y="13.9" width="4" height="1.1" fill="#9aa3a7"/><rect x="20" y="13.9" width="4" height="1.1" fill="#9aa3a7"/><rect x="25" y="13.9" width="4" height="1.1" fill="#9aa3a7"/><rect x="30" y="13.9" width="4" height="1.1" fill="#9aa3a7"/><rect x="35" y="13.9" width="4" height="1.1" fill="#9aa3a7"/><rect x="40" y="13.9" width="4" height="1.1" fill="#9aa3a7"/><rect x="45" y="13.9" width="4" height="1.1" fill="#9aa3a7"/><rect x="50" y="13.9" width="4" height="1.1" fill="#9aa3a7"/><rect x="55" y="13.9" width="4" height="1.1" fill="#9aa3a7"/><rect x="60" y="13.9" width="4" height="1.1" fill="#9aa3a7"/><rect x="65" y="13.9" width="4" height="1.1" fill="#9aa3a7"/><rect x="70" y="13.9" width="4" height="1.1" fill="#9aa3a7"/><rect x="75" y="13.9" width="4" height="1.1" fill="#9aa3a7"/><rect x="80" y="13.9" width="4" height="1.1" fill="#9aa3a7"/><rect x="85" y="13.9" width="4" height="1.1" fill="#9aa3a7"/><rect x="90" y="13.9" width="4" height="1.1" fill="#9aa3a7"/><rect x="95" y="12.1" width="4" height="2.9" fill="#9aa3a7"/><rect x="100" y="1.1" width="4" height="13.9" fill="#9aa3a7"/><rect x="105" y="0.1" width="4" height="14.9" fill="#9aa3a7"/><rect x="110" y="1.1" width="4" height="13.9" fill="#9aa3a7"/><rect x="115" y="1.1" width="4" height="13.9" fill="#9aa3a7"/><rect x="120" y="4.2" width="4" height="10.8" fill="#9aa3a7"/></svg></td><td class="r">8535</td><td class="r">0</td><td class="r">0</td><td class="r">1030</td><td class="s"><svg class="spk" width="124" height="16" viewBox="0 0 124 16"><rect x="0" y="13.9" width="4" height="1.1" fill="#48b878"/><rect x="5" y="13.9" width="4" height="1.1" fill="#48b878"/><rect x="10" y="13.9" width="4" height="1.1" fill="#48b878"/><rect x="15" y="13.9" width="4" height="1.1" fill="#48b878"/><rect x="20" y="13.9" width="4" height="1.1" fill="#48b878"/><rect x="25" y="13.9" width="4" height="1.1" fill="#48b878"/><rect x="30" y="13.9" width="4" height="1.1" fill="#48b878"/><rect x="35" y="13.9" width="4" height="1.1" fill="#48b878"/><rect x="40" y="13.9" width="4" height="1.1" fill="#48b878"/><rect x="45" y="13.9" width="4" height="1.1" fill="#48b878"/><rect x="50" y="13.9" width="4" height="1.1" fill="#48b878"/><rect x="55" y="13.9" width="4" height="1.1" fill="#48b878"/><rect x="60" y="13.9" width="4" height="1.1" fill="#48b878"/><rect x="65" y="13.9" width="4" height="1.1" fill="#48b878"/><rect x="70" y="13.9" width="4" height="1.1" fill="#48b878"/><rect x="75" y="13.9" width="4" height="1.1" fill="#48b878"/><rect x="80" y="13.9" width="4" height="1.1" fill="#48b878"/><rect x="85" y="13.9" width="4" height="1.1" fill="#48b878"/><rect x="90" y="13.9" width="4" height="1.1" fill="#48b878"/><rect x="95" y="2.2" width="4" height="12.8" fill="#48b878"/><rect x="100" y="0.1" width="4" height="14.9" fill="#48b878"/><rect x="105" y="1.1" width="4" height="13.9" fill="#48b878"/><rect x="110" y="1.1" width="4" height="13.9" fill="#48b878"/><rect x="115" y="1.1" width="4" height="13.9" fill="#48b878"/><rect x="120" y="1.1" width="4" height="13.9" fill="#48b878"/></svg></td><td class="w"></td></tr><tr style="background:#2b2f36"><td class="r">5</td><td class="l">/accounts/{AccountId}</td><td class="l">AIS</td><td class="r">2654</td><td class="r">2802</td><td class="s"><svg class="spk" width="124" height="16" viewBox="0 0 124 16"><rect x="0" y="13.9" width="4" height="1.1" fill="#9aa3a7"/><rect x="5" y="13.9" width="4" height="1.1" fill="#9aa3a7"/><rect x="10" y="13.9" width="4" height="1.1" fill="#9aa3a7"/><rect x="15" y="13.9" width="4" height="1.1" fill="#9aa3a7"/><rect x="20" y="13.9" width="4" height="1.1" fill="#9aa3a7"/><rect x="25" y="13.9" width="4" height="1.1" fill="#9aa3a7"/><rect x="30" y="13.9" width="4" height="1.1" fill="#9aa3a7"/><rect x="35" y="13.9" width="4" height="1.1" fill="#9aa3a7"/><rect x="40" y="13.9" width="4" height="1.1" fill="#9aa3a7"/><rect x="45" y="13.9" width="4" height="1.1" fill="#9aa3a7"/><rect x="50" y="13.9" width="4" height="1.1" fill="#9aa3a7"/><rect x="55" y="13.9" width="4" height="1.1" fill="#9aa3a7"/><rect x="60" y="13.9" width="4" height="1.1" fill="#9aa3a7"/><rect x="65" y="13.9" width="4" height="1.1" fill="#9aa3a7"/><rect x="70" y="13.9" width="4" height="1.1" fill="#9aa3a7"/><rect x="75" y="13.9" width="4" height="1.1" fill="#9aa3a7"/><rect x="80" y="13.9" width="4" height="1.1" fill="#9aa3a7"/><rect x="85" y="13.9" width="4" height="1.1" fill="#9aa3a7"/><rect x="90" y="13.9" width="4" height="1.1" fill="#9aa3a7"/><rect x="95" y="11.3" width="4" height="3.7" fill="#9aa3a7"/><rect x="100" y="1.1" width="4" height="13.9" fill="#9aa3a7"/><rect x="105" y="2.1" width="4" height="12.9" fill="#9aa3a7"/><rect x="110" y="1.1" width="4" height="13.9" fill="#9aa3a7"/><rect x="115" y="0.1" width="4" height="14.9" fill="#9aa3a7"/><rect x="120" y="3.1" width="4" height="11.9" fill="#9aa3a7"/></svg></td><td class="r">2802</td><td class="r">0</td><td class="r">0</td><td class="r">1010</td><td class="s"><svg class="spk" width="124" height="16" viewBox="0 0 124 16"><rect x="0" y="13.9" width="4" height="1.1" fill="#48b878"/><rect x="5" y="13.9" width="4" height="1.1" fill="#48b878"/><rect x="10" y="13.9" width="4" height="1.1" fill="#48b878"/><rect x="15" y="13.9" width="4" height="1.1" fill="#48b878"/><rect x="20" y="13.9" width="4" height="1.1" fill="#48b878"/><rect x="25" y="13.9" width="4" height="1.1" fill="#48b878"/><rect x="30" y="13.9" width="4" height="1.1" fill="#48b878"/><rect x="35" y="13.9" width="4" height="1.1" fill="#48b878"/><rect x="40" y="13.9" width="4" height="1.1" fill="#48b878"/><rect x="45" y="13.9" width="4" height="1.1" fill="#48b878"/><rect x="50" y="13.9" width="4" height="1.1" fill="#48b878"/><rect x="55" y="13.9" width="4" height="1.1" fill="#48b878"/><rect x="60" y="13.9" width="4" height="1.1" fill="#48b878"/><rect x="65" y="13.9" width="4" height="1.1" fill="#48b878"/><rect x="70" y="13.9" width="4" height="1.1" fill="#48b878"/><rect x="75" y="13.9" width="4" height="1.1" fill="#48b878"/><rect x="80" y="13.9" width="4" height="1.1" fill="#48b878"/><rect x="85" y="13.9" width="4" height="1.1" fill="#48b878"/><rect x="90" y="13.9" width="4" height="1.1" fill="#48b878"/><rect x="95" y="1.1" width="4" height="13.9" fill="#48b878"/><rect x="100" y="1.1" width="4" height="13.9" fill="#48b878"/><rect x="105" y="0.1" width="4" height="14.9" fill="#48b878"/><rect x="110" y="1.1" width="4" height="13.9" fill="#48b878"/><rect x="115" y="1.1" width="4" height="13.9" fill="#48b878"/><rect x="120" y="1.1" width="4" height="13.9" fill="#48b878"/></svg></td><td class="w"></td></tr></tbody></table><div class="pg"><span style="left:1565px;width:40px;color:#6b7785;letter-spacing:-0.6px">« Prev</span><span style="left:1613px;width:28px;border:1px solid #1a96ea;border-radius:3px;color:#1a96ea;line-height:22px;top:3px">1</span><span style="left:1641px;width:28px">2</span><span style="left:1669px;width:28px">3</span><span style="left:1697px;width:28px">4</span><span style="left:1725px;width:28px">5</span><span style="left:1753px;width:28px">6</span><span style="left:1781px;width:28px">7</span><span style="left:1815px;width:42px;letter-spacing:-0.4px">Next »</span></div></div></body></html>
